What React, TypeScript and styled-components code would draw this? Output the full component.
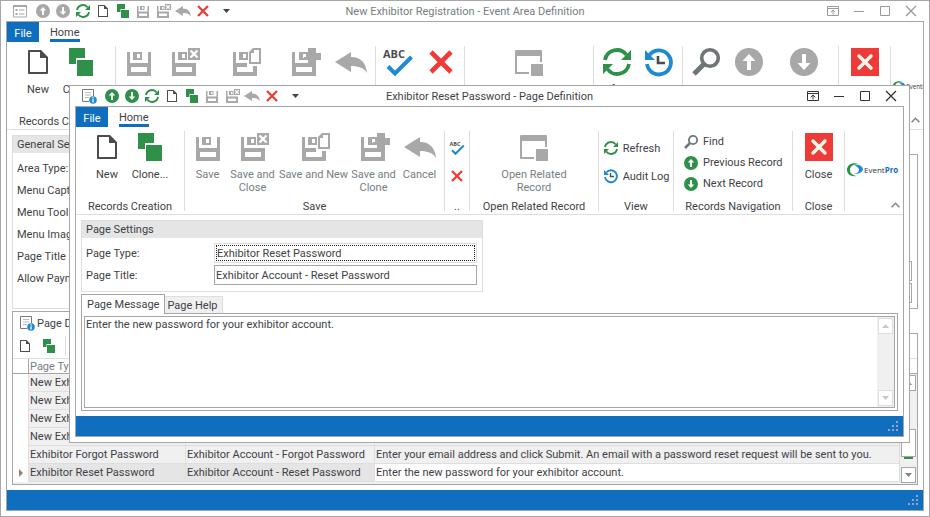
import React, { ReactNode } from "react";
import styled, { createGlobalStyle, css } from "styled-components";

const c = {
  line: "#a6a6a6",
  soft: "#dedede",
  head: "#e5e5e5",
  cell: "#f0f0f0",
  blue: "#106ebe",
  text: "#3f3f46",
  dim: "#767e82",
  off: "#a8a8a8",
  green: "#2f9149",
  red: "#ee3b38",
  sky: "#1e8ad2",
  ink: "#4a4d4f",
};

const Global = createGlobalStyle`
  *, *::before, *::after { box-sizing: border-box; }
  body { margin: 0; background: #fff; overflow: hidden; }
  body, button, input, textarea, table {
    font-family: Roboto, "DejaVu Sans Condensed", sans-serif;
    font-size: 11px;
    line-height: 13px;
    color: ${c.text};
  }
  button { border: 0; padding: 0; margin: 0; background: none; white-space: nowrap; }
  input, textarea { margin: 0; border-radius: 0; outline: 0; background: #fff; }
`;

/* ---------- icons, drawn on a 32 unit grid ---------- */

type IconProps = { size?: number; color?: string };

const Svg = styled.svg`
  display: block;
  flex: none;
`;

const Icon = ({ size = 32, children }: { size?: number; children: ReactNode }) => (
  <Svg width={size} height={size} viewBox="0 0 32 32" fill="none" aria-hidden="true">
    {children}
  </Svg>
);

const NewIcon = ({ size }: IconProps) => (
  <Icon size={size}>
    <path
      fill={c.ink}
      fillRule="evenodd"
      d="M7 4h12l7 7v16a1 1 0 0 1-1 1H7a1 1 0 0 1-1-1V5a1 1 0 0 1 1-1zM8 6v20h16V12h-6V6z"
    />
  </Icon>
);

const CloneIcon = ({ size }: IconProps) => (
  <Icon size={size}>
    <path fill={c.green} d="M4 2h16v10h-9v6H4zM12 14h16v16H12z" />
  </Icon>
);

const diskTab = "M10 6h9v8h-9zM14 8v4h3V8z";

const SaveIcon = ({ size }: IconProps) => (
  <Icon size={size}>
    <path fill={c.off} fillRule="evenodd" d={"M4 6h3v11h18V6h3v24H4zM8 21v5h16v-5z" + diskTab} />
  </Icon>
);

const SaveCloseIcon = ({ size }: IconProps) => (
  <Icon size={size}>
    <path fill={c.off} fillRule="evenodd" d={"M4 6h3v11h21v13H4zM8 21v5h16v-5z" + diskTab} />
    <path fill={c.off} d="M20 2h12v12H20z" />
    <path stroke="#fff" strokeWidth="2.4" d="M22.500 4.500l7 7M29.500 4.500l-7 7" />
  </Icon>
);

const SaveNewIcon = ({ size }: IconProps) => (
  <Icon size={size}>
    <path fill={c.off} fillRule="evenodd" d={"M4 6h3v11h11v4H8v5h16v-6h4v10H4z" + diskTab} />
    <path fill={c.off} fillRule="evenodd" d="M24 2h8v16H20V6zM25 4v3h-3v9h8V4z" />
  </Icon>
);

const SaveCloneIcon = ({ size }: IconProps) => (
  <Icon size={size}>
    <path fill={c.off} fillRule="evenodd" d={"M3 6h3v11h21v13H3zM7 21v5h16v-5z" + diskTab} />
    <path fill={c.off} d="M19 2h8v5h5v7h-5v4h-8v-4h-4v-3h4z" />
  </Icon>
);

const UndoIcon = ({ size }: IconProps) => (
  <Icon size={size}>
    <path fill={c.off} d="M0 16L16 6v5c10 0 15 6 16 16-3-5-8-7-16-7v6z" />
  </Icon>
);

const CrossIcon = ({ size }: IconProps) => (
  <Icon size={size}>
    <path stroke={c.red} strokeWidth="4.600" d="M6 6l20 20M26 6L6 26" />
  </Icon>
);

const SpellIcon = ({ size }: IconProps) => (
  <Icon size={size}>
    <text x="1" y="12" fill={c.ink} fontFamily="Open Sans, sans-serif" fontWeight="700" fontSize="11">
      ABC
    </text>
    <path stroke={c.sky} strokeWidth="4" d="M6 20.500l7 7L29.500 11" />
  </Icon>
);

const RelatedIcon = ({ size }: IconProps) => (
  <Icon size={size}>
    <path fill={c.off} d="M3 4h25a1 1 0 0 1 1 1v11h-2v-6H4v16h12v2H2V5a1 1 0 0 1 1-1zM18 18h12v12H18z" />
  </Icon>
);

const RefreshIcon = ({ size }: IconProps) => (
  <Icon size={size}>
    <path
      stroke={c.green}
      strokeWidth="3.800"
      d="M4 14A12 12 0 0 1 25.500 9M28 18A12 12 0 0 1 6.500 23"
    />
    <path fill={c.green} d="M30 4v10H20zM2 28V18h10z" />
  </Icon>
);

const AuditIcon = ({ size }: IconProps) => (
  <Icon size={size}>
    <path stroke={c.sky} strokeWidth="3.800" d="M6.500 9A12 12 0 1 1 4 18" />
    <path fill={c.sky} d="M2 4v10h10z" />
    <path stroke={c.ink} strokeWidth="2.600" d="M15 10v7h7" />
  </Icon>
);

const FindIcon = ({ size }: IconProps) => (
  <Icon size={size}>
    <circle cx="20" cy="12" r="8.300" stroke="#6f7678" strokeWidth="3.600" />
    <path stroke="#6f7678" strokeWidth="5" d="M13.500 18.500L4 28" />
  </Icon>
);

const UpIcon = ({ size, color = c.off }: IconProps) => (
  <Icon size={size}>
    <circle cx="16" cy="16" r="14" fill={color} />
    <path fill="#fff" d="M16 8l6.500 7H18v9h-4v-9H9.500z" />
  </Icon>
);

const DownIcon = ({ size, color = c.off }: IconProps) => (
  <Icon size={size}>
    <circle cx="16" cy="16" r="14" fill={color} />
    <path fill="#fff" d="M16 24l6.500-7H18V8h-4v9H9.500z" />
  </Icon>
);

const CloseBoxIcon = () => (
  <Icon>
    <path fill={c.red} d="M2 2h28v28H2z" />
    <path stroke="#fff8ec" strokeWidth="3.400" strokeLinecap="round" d="M10 10l12 12M22 10L10 22" />
  </Icon>
);

const FormIcon = () => (
  <Icon size={16}>
    <path stroke={c.off} strokeWidth="2" d="M3 5h26v23H3z" />
    <path fill={c.off} d="M2 4h28v4H2zM7 12h4v4H7zM7 20h4v4H7zM14 13h11v2H14zM14 21h11v2H14z" />
  </Icon>
);

const PageIcon = () => (
  <Icon size={16}>
    <path stroke="#77797b" strokeWidth="2" d="M16 27H3V3h22v13" />
    <path stroke="#bcbcbc" strokeWidth="2" d="M8 9h12M8 14h12M8 19h8" />
    <circle cx="24" cy="24" r="7.500" fill={c.sky} />
    <path stroke="#fff" strokeWidth="2.600" d="M24 18.500v2.500M24 22.500v6.500" />
  </Icon>
);

const Triangle = ({ up, color }: { up?: boolean; color: string }) => (
  <Svg width="7" height="4" viewBox="0 0 7 4" aria-hidden="true">
    <path fill={color} d={up ? "M0 4l3.500-4L7 4z" : "M0 0h7L3.500 4z"} />
  </Svg>
);

const Chevron = () => (
  <Svg width="9" height="6" viewBox="0 0 9 6" fill="none" aria-hidden="true">
    <path stroke="#8f8480" strokeWidth="1.600" d="M.600 5.300l3.900-4 3.900 4" />
  </Svg>
);

const Grip = () => (
  <Svg width="10" height="10" viewBox="0 0 10 10" aria-hidden="true">
    <path fill="#8fa6cc" d="M8 0h2v2H8zM8 4h2v2H8zM4 4h2v2H4zM8 8h2v2H8zM4 8h2v2H4zM0 8h2v2H0z" />
  </Svg>
);

const Caption = styled.div<{ $active: boolean }>`
  display: flex;
  gap: 14px;
  justify-content: flex-end;
  padding-right: 12px;
  button {
    color: ${(p) => (p.$active ? "#333" : "#999")};
  }
`;

const CaptionButtons = ({ active }: { active: boolean }) => (
  <Caption $active={active}>
    <button aria-label="Ribbon display options">
      <Svg width="12" height="12" viewBox="0 0 12 12" fill="none" stroke="currentColor">
        <path d="M.5 1.500h11v9H.5zM.5 3.500h11M6 9.500V5M3.700 7.200L6 5l2.300 2.200" />
      </Svg>
    </button>
    <button aria-label="Minimize">
      <Svg width="12" height="12" viewBox="0 0 12 12" stroke="currentColor">
        <path d="M1 6.500h10" />
      </Svg>
    </button>
    <button aria-label="Maximize">
      <Svg width="12" height="12" viewBox="0 0 12 12" fill="none" stroke="currentColor">
        <path d="M1.500 1.500h9v9h-9z" />
      </Svg>
    </button>
    <button aria-label="Close window">
      <Svg width="12" height="12" viewBox="0 0 12 12" stroke="currentColor" strokeWidth="1.300">
        <path d="M1 1l10 10M11 1L1 11" />
      </Svg>
    </button>
  </Caption>
);

const Logo = ({ width }: { width: number }) => (
  <Svg width={width} height={width / 4} viewBox="0 0 56 14" role="img" aria-label="EventPro">
    <path fill={c.green} d="M13 1C6-1 1 2 1 7c0 4 4 7 9 6-4-1-6-3-6-6 0-4 4-6 9-6z" />
    <path fill={c.sky} d="M8 2c5-1 9 1 9 5-2 3-5 4-9 4 3-1 5-2 5-4S11 3 8 2z" />
    <text x="18" y="10" fontFamily="Open Sans, sans-serif" fontSize="8" fill="#333">
      Event
      <tspan fill={c.blue} fontWeight="700">
        Pro
      </tspan>
    </text>
  </Svg>
);

/* ---------- window shell ---------- */

const WindowBox = styled.section`
  display: flex;
  flex-direction: column;
  isolation: isolate;
  background: #fff;
  border: 1px solid ${c.line};
  padding: 0 5px 5px;
`;

const TitleBar = styled.header`
  display: grid;
  grid-template-columns: minmax(0, 1fr) auto minmax(0, 1fr);
  align-items: center;
  height: 20px;
  margin: 0 -5px;
`;

const Title = styled.h1<{ $active: boolean }>`
  margin: 0;
  font-size: 11px;
  font-weight: 400;
  white-space: nowrap;
  color: ${(p) => (p.$active ? c.text : c.dim)};
`;

const Quick = styled.div`
  display: flex;
  align-items: center;
  padding-left: 11px;
`;

const QuickButton = styled.button`
  display: flex;
  justify-content: center;
  width: 20px;
`;

const QuickSet = styled.div`
  display: flex;
  align-items: center;
  padding-left: 5px;
`;

const QuickMore = styled(QuickButton)`
  margin-left: 3px;
`;

const Frame = styled.div`
  display: flex;
  flex-direction: column;
  flex: 1;
  border: 1px solid ${c.line};
  overflow: hidden;
`;

const TabRow = styled.nav`
  display: flex;
  height: 20px;
`;

const FileTab = styled.button`
  width: 32px;
  padding-top: 2px;
  color: #fff;
  background: ${c.blue};
`;

const HomeTab = styled.button`
  margin-left: 11px;
  padding-top: 3px;
  border-bottom: 3px solid ${c.blue};
`;

const Status = styled.footer`
  display: flex;
  justify-content: flex-end;
  align-items: center;
  height: 20px;
  padding-right: 5px;
  background: ${c.blue};
`;

const Body = styled.main`
  display: flex;
  flex-direction: column;
  flex: 1;
  gap: 2px;
  padding: 5px;
`;

/* ---------- ribbon ---------- */

const Ribbon = styled.div`
  display: flex;
  height: 88px;
  border-bottom: 1px solid ${c.soft};
`;

const GroupBox = styled.div<{ $w: number }>`
  display: flex;
  flex-direction: column;
  flex: none;
  width: ${(p) => p.$w}px;
  padding: 4px 1px 1px 0;
  background: linear-gradient(${c.soft}, ${c.soft}) no-repeat right 4px / 1px 80px;
`;

const GroupItems = styled.div`
  display: flex;
  justify-content: center;
  flex: 1;
`;

const GroupName = styled.div`
  text-align: center;
  white-space: nowrap;
`;

const Group = ({ name, w, children }: { name: string; w: number; children: ReactNode }) => (
  <GroupBox $w={w}>
    <GroupItems>{children}</GroupItems>
    <GroupName>{name}</GroupName>
  </GroupBox>
);

const BigButton = styled.button<{ $w: number }>`
  display: flex;
  flex-direction: column;
  align-items: center;
  gap: 5px;
  flex: none;
  width: ${(p) => p.$w}px;
  white-space: pre;
  &:disabled {
    color: ${c.dim};
  }
`;

const Big = ({ icon, label, w, off }: { icon: ReactNode; label: string; w: number; off?: boolean }) => (
  <BigButton $w={w} disabled={off}>
    {icon}
    {label}
  </BigButton>
);

const SmallColumn = styled.div<{ $row: number }>`
  display: flex;
  flex-direction: column;
  flex: 1;
  padding: ${(p) => (p.$row > 25 ? 3 : 0)}px 4px 0;
  button {
    display: flex;
    align-items: center;
    gap: 4px;
    height: ${(p) => p.$row}px;
  }
`;

const NavColumn = styled(SmallColumn)`
  padding-left: 9px;
`;

const Tail = styled.div<{ $top: number }>`
  display: flex;
  flex-direction: column;
  justify-content: space-between;
  flex: 1;
  min-width: 0;
  padding: ${(p) => p.$top}px 3px 6px 1px;
`;

const Collapse = styled.button`
  align-self: flex-end;
`;

const RecordGroups = () => (
  <>
    <Group name="Records Creation" w={109}>
      <Big w={40} icon={<NewIcon />} label="New" />
      <Big w={46} icon={<CloneIcon />} label="Clone..." />
    </Group>
    <Group name="Save" w={260}>
      <Big w={42} off icon={<SaveIcon />} label="Save" />
      <Big w={48} off icon={<SaveCloseIcon />} label={"Save and\nClose"} />
      <Big w={74} off icon={<SaveNewIcon />} label="Save and New" />
      <Big w={46} off icon={<SaveCloneIcon />} label={"Save and\nClone"} />
      <Big w={46} off icon={<UndoIcon />} label="Cancel" />
    </Group>
  </>
);

const RelatedGroup = () => (
  <Group name="Open Related Record" w={129}>
    <Big w={100} off icon={<RelatedIcon />} label={"Open Related\nRecord"} />
  </Group>
);

const CloseGroup = () => (
  <Group name="Close" w={52}>
    <Big w={44} icon={<CloseBoxIcon />} label="Close" />
  </Group>
);

const RibbonTail = ({ logo, top }: { logo: number; top: number }) => (
  <Tail $top={top}>
    <Logo width={logo} />
    <Collapse aria-label="Collapse ribbon">
      <Chevron />
    </Collapse>
  </Tail>
);

type ShellProps = {
  as?: React.ElementType;
  active: boolean;
  title: string;
  icon: ReactNode;
  ribbon: ReactNode;
  children: ReactNode;
};

const Shell = ({ as = WindowBox, active, title, icon, ribbon, children }: ShellProps) => {
  const Box = as;
  const arrow = active ? c.green : c.off;
  const quick: [string, ReactNode][] = [
    ["Previous", <UpIcon size={16} color={arrow} />],
    ["Next", <DownIcon size={16} color={arrow} />],
    ["Refresh", <RefreshIcon size={16} />],
    ["New", <NewIcon size={16} />],
    ["Clone", <CloneIcon size={16} />],
    ["Save", <SaveIcon size={16} />],
    ["Save and close", <SaveCloseIcon size={16} />],
    ["Cancel", <UndoIcon size={16} />],
    ["Delete", <CrossIcon size={16} />],
  ];
  return (
    <Box aria-label={title}>
      <TitleBar>
        <Quick>
          {icon}
          <QuickSet>
            {quick.map(([name, node]) => (
              <QuickButton key={name} aria-label={name}>
                {node}
              </QuickButton>
            ))}
            <QuickMore aria-label="Customize toolbar">
              <Triangle color="#444" />
            </QuickMore>
          </QuickSet>
        </Quick>
        <Title $active={active}>{title}</Title>
        <CaptionButtons active={active} />
      </TitleBar>
      <Frame>
        <TabRow>
          <FileTab>File</FileTab>
          <HomeTab>Home</HomeTab>
        </TabRow>
        <Ribbon>{ribbon}</Ribbon>
        <Body>{children}</Body>
        <Status>
          <Grip />
        </Status>
      </Frame>
    </Box>
  );
};

/* ---------- shared body parts ---------- */

const Panel = styled.section<{ $w: number }>`
  width: ${(p) => p.$w}px;
  border: 1px solid ${c.soft};
  padding-bottom: 6px;
`;

const PanelHead = styled.h2`
  margin: 0 0 5px;
  padding: 2px 4px;
  font-size: 11px;
  font-weight: 400;
  background: ${c.head};
`;

const FieldRow = styled.label`
  display: grid;
  grid-template-columns: 128px 1fr;
  align-items: center;
  padding: 0 5px 0 4px;
  & + & {
    margin-top: 2px;
  }
`;

const fieldHeight = css`
  width: 100%;
  height: 20px;
`;

const Field = styled.input`
  ${fieldHeight}
  border: 1px solid ${c.line};
  padding: 0 1px;
`;

const FocusRing = styled.span`
  ${fieldHeight}
  display: block;
  border: 1px solid ${c.soft};
  padding: 1px;
`;

const FocusedField = styled.input`
  display: block;
  width: 100%;
  height: 16px;
  border: 1px dotted #222;
  padding: 0;
`;

const TabStrip = styled.div`
  display: flex;
  align-items: flex-end;
  position: relative;
  z-index: 1;
  margin-bottom: -1px;
`;

const Tab = styled.button<{ $on?: boolean }>`
  display: flex;
  align-items: center;
  gap: 2px;
  height: ${(p) => (p.$on ? 20 : 17)}px;
  padding: 0 5px;
  border: 1px solid ${(p) => (p.$on ? c.line : c.soft)};
  border-bottom: 0;
  background: ${(p) => (p.$on ? "#fff" : c.cell)};
  ${(p) => !p.$on && "margin-bottom: 1px; padding: 0 4px 0 2px; border-left: 0;"}
`;

const IconTab = styled(Tab)`
  height: 23px;
  padding: 0 6px;
`;

const TabPage = styled.div`
  display: flex;
  flex-direction: column;
  flex: 1;
  border: 1px solid ${c.line};
`;

const Tabbed = styled.div`
  display: flex;
  flex-direction: column;
  flex: 1;
  min-width: 0;
`;

const ScrollTrack = styled.div`
  display: flex;
  flex-direction: column;
  flex: 1;
  width: 17px;
  padding: 1px;
  background: ${c.cell};
`;

const ScrollButton = styled.button<{ $off?: boolean }>`
  display: flex;
  align-items: center;
  justify-content: center;
  width: 15px;
  height: 16px;
  background: #fff;
  border: 1px solid ${(p) => (p.$off ? c.soft : c.line)};
`;

const Spacer = styled.div<{ $h?: number }>`
  flex: ${(p) => (p.$h ? "none" : 1)};
  height: ${(p) => p.$h ?? 0}px;
`;

/* ---------- page dialog ---------- */

const DialogBox = styled(WindowBox)`
  position: absolute;
  z-index: 2;
  top: 85px;
  left: 69px;
  right: 20px;
`;

const MemoBox = styled.div`
  display: flex;
  margin: 2px;
  height: 92px;
  border: 1px solid ${c.line};
`;

const Memo = styled.textarea`
  flex: 1;
  border: 0;
  padding: 1px;
  resize: none;
  overflow: hidden;
`;

const MemoScroll = styled(ScrollTrack)`
  flex: none;
`;

const PageDialog = () => (
  <Shell
    as={DialogBox}
    active
    title="Exhibitor Reset Password - Page Definition"
    icon={<PageIcon />}
    ribbon={
      <>
        <RecordGroups />
        <Group name=".." w={25}>
          <SmallColumn $row={28}>
            <button aria-label="Spell check">
              <SpellIcon size={16} />
            </button>
            <button aria-label="Delete">
              <CrossIcon size={16} />
            </button>
          </SmallColumn>
        </Group>
        <RelatedGroup />
        <Group name="View" w={75}>
          <SmallColumn $row={28}>
            <button>
              <RefreshIcon size={16} />
              Refresh
            </button>
            <button>
              <AuditIcon size={16} />
              Audit Log
            </button>
          </SmallColumn>
        </Group>
        <Group name="Records Navigation" w={119}>
          <NavColumn $row={21}>
            <button>
              <FindIcon size={16} />
              Find
            </button>
            <button>
              <UpIcon size={16} color={c.green} />
              Previous Record
            </button>
            <button>
              <DownIcon size={16} color={c.green} />
              Next Record
            </button>
          </NavColumn>
        </Group>
        <CloseGroup />
        <RibbonTail logo={56} top={36} />
      </>
    }
  >
    <Panel $w={402}>
      <PanelHead>Page Settings</PanelHead>
      <FieldRow>
        Page Type:
        <FocusRing>
          <FocusedField readOnly defaultValue="Exhibitor Reset Password" />
        </FocusRing>
      </FieldRow>
      <FieldRow>
        Page Title:
        <Field defaultValue="Exhibitor Account - Reset Password" />
      </FieldRow>
    </Panel>
    <Tabbed>
      <TabStrip role="tablist">
        <Tab $on role="tab" aria-selected="true">
          Page Message
        </Tab>
        <Tab role="tab" aria-selected="false">
          Page Help
        </Tab>
      </TabStrip>
      <TabPage>
        <MemoBox>
          <Memo aria-label="Page Message" defaultValue="Enter the new password for your exhibitor account." />
          <MemoScroll>
            <ScrollButton $off disabled aria-label="Scroll up">
              <Triangle up color="#c9c9c4" />
            </ScrollButton>
            <Spacer />
            <ScrollButton $off disabled aria-label="Scroll down">
              <Triangle color="#c9c9c4" />
            </ScrollButton>
          </MemoScroll>
        </MemoBox>
      </TabPage>
    </Tabbed>
  </Shell>
);

/* ---------- area window ---------- */

const AreaBox = styled(WindowBox)`
  min-height: 100vh;
`;

const Split = styled.div`
  display: flex;
  gap: 5px;
  height: 174px;
`;

const AreaPanel = styled(Panel)`
  flex: none;
`;

const SidePage = styled(TabPage)`
  justify-content: flex-end;
  padding: 5px;
  gap: 2px;
`;

const GridTools = styled.div`
  display: flex;
  align-items: center;
  gap: 8px;
  height: 25px;
  padding-left: 4px;
  border-bottom: 1px solid ${c.soft};
`;

const ToolDivider = styled.div`
  width: 1px;
  height: 20px;
  background: ${c.soft};
`;

const GridArea = styled.div`
  display: flex;
  flex: 1;
`;

const GridTable = styled.div`
  flex: 1;
  min-width: 0;
  background: ${c.cell};
`;

const Table = styled.table`
  width: 100%;
  table-layout: fixed;
  border-spacing: 0;
  background: #fff;
  th,
  td {
    padding: 0 1px;
    text-align: left;
    font-weight: 400;
    white-space: nowrap;
    overflow: hidden;
  }
  th {
    height: 15px;
    color: ${c.dim};
    border-bottom: 1px solid ${c.line};
  }
  th:first-child {
    border-right: 1px solid ${c.line};
  }
`;

const Cell = styled.td<{ $bg: string }>`
  height: 18px;
  border-right: 1px solid ${c.soft};
  border-bottom: 1px solid ${c.soft};
  background: ${(p) => p.$bg};
`;

const Indicator = styled.td`
  border-right: 1px solid ${c.soft};
`;

const RowMark = styled(Svg)`
  margin-left: 5px;
`;

const Col = styled.col<{ $w?: number }>`
  width: ${(p) => (p.$w ? `${p.$w}px` : "auto")};
`;

const ScrollSide = styled.div`
  display: flex;
  flex-direction: column;
  width: 17px;
`;

const ScrollHead = styled.div`
  height: 15px;
  border-bottom: 1px solid ${c.line};
`;

const Thumb = styled.div`
  height: 28px;
  background: #fff;
  border: 1px solid ${c.line};
`;

const Marker = styled.div`
  width: 9px;
  height: 2px;
  margin-left: 3px;
  background: ${c.green};
`;

const pages: [string, string, string][] = [
  ["New Exhibitor Registration", "New Exhibitor - Account", "Enter your account details."],
  ["New Exhibitor Contact", "New Exhibitor - Contact", "Enter your contact details."],
  ["New Exhibitor Address", "New Exhibitor - Address", "Enter your address."],
  ["New Exhibitor Confirmation", "New Exhibitor - Confirmation", "Thank you for registering."],
  [
    "Exhibitor Forgot Password",
    "Exhibitor Account - Forgot Password",
    "Enter your email address and click Submit. An email with a password reset request will be sent to you.",
  ],
  [
    "Exhibitor Reset Password",
    "Exhibitor Account - Reset Password",
    "Enter the new password for your exhibitor account.",
  ],
];

const areaFields = [
  "Area Type:",
  "Menu Caption:",
  "Menu Tool Tip:",
  "Menu Image:",
  "Page Title Image:",
  "Allow Payments:",
];

const AreaWindow = () => (
  <Shell
    as={AreaBox}
    active={false}
    title="New Exhibitor Registration - Event Area Definition"
    icon={<FormIcon />}
    ribbon={
      <>
        <RecordGroups />
        <Group name="Edit" w={89}>
          <Big w={42} icon={<SpellIcon />} label={"Check\nSpelling"} />
          <Big w={44} icon={<CrossIcon />} label="Delete" />
        </Group>
        <RelatedGroup />
        <Group name="View" w={89}>
          <Big w={42} icon={<RefreshIcon />} label="Refresh" />
          <Big w={42} icon={<AuditIcon />} label={"Audit\nLog"} />
        </Group>
        <Group name="Records Navigation" w={156}>
          <Big w={36} icon={<FindIcon />} label="Find" />
          <Big w={50} icon={<UpIcon />} label={"Previous\nRecord"} />
          <Big w={60} icon={<DownIcon />} label="Next Record" />
        </Group>
        <CloseGroup />
        <RibbonTail logo={44} top={39} />
      </>
    }
  >
    <Split>
      <AreaPanel $w={420}>
        <PanelHead>General Settings</PanelHead>
        {areaFields.map((name) => (
          <FieldRow key={name}>
            {name}
            <Field />
          </FieldRow>
        ))}
      </AreaPanel>
      <Tabbed>
        <TabStrip role="tablist">
          <Tab $on role="tab" aria-selected="true">
            Area Options
          </Tab>
        </TabStrip>
        <SidePage>
          <Field aria-label="First option" />
          <Field aria-label="Second option" />
        </SidePage>
      </Tabbed>
    </Split>
    <Tabbed>
      <TabStrip role="tablist">
        <IconTab $on role="tab" aria-selected="true">
          <PageIcon />
          Page Definitions
        </IconTab>
      </TabStrip>
      <TabPage>
        <GridTools>
          <button aria-label="New page">
            <NewIcon size={16} />
          </button>
          <button aria-label="Clone page">
            <CloneIcon size={16} />
          </button>
          <ToolDivider />
        </GridTools>
        <GridArea>
          <GridTable>
            <Table>
              <colgroup>
                <Col $w={16} />
                <Col $w={157} />
                <Col $w={189} />
                <Col />
              </colgroup>
              <thead>
                <tr>
                  <th aria-label="Current row" />
                  <th>Page Type</th>
                  <th>Page Title</th>
                  <th>Page Message</th>
                </tr>
              </thead>
              <tbody>
                {pages.map(([type, title, message], i) => {
                  const current = i === pages.length - 1;
                  const bg = current ? c.head : c.cell;
                  return (
                    <tr key={type}>
                      <Indicator>
                        {current && (
                          <RowMark width="4" height="8" viewBox="0 0 4 8">
                            <path fill="#94807c" d="M0 0l4 4-4 4z" />
                          </RowMark>
                        )}
                      </Indicator>
                      <Cell $bg={bg}>{type}</Cell>
                      <Cell $bg={bg}>{title}</Cell>
                      <Cell $bg={current ? "#fff" : bg}>{message}</Cell>
                    </tr>
                  );
                })}
              </tbody>
            </Table>
          </GridTable>
          <ScrollSide>
            <ScrollHead />
            <ScrollTrack>
              <ScrollButton aria-label="Scroll up">
                <Triangle up color="#94807c" />
              </ScrollButton>
              <Spacer $h={38} />
              <Thumb />
              <Marker />
              <Spacer />
              <ScrollButton aria-label="Scroll down">
                <Triangle color="#94807c" />
              </ScrollButton>
            </ScrollTrack>
          </ScrollSide>
        </GridArea>
      </TabPage>
    </Tabbed>
  </Shell>
);

const Desktop = styled.div`
  position: relative;
`;

export default function App() {
  return (
    <Desktop>
      <Global />
      <AreaWindow />
      <PageDialog />
    </Desktop>
  );
}
